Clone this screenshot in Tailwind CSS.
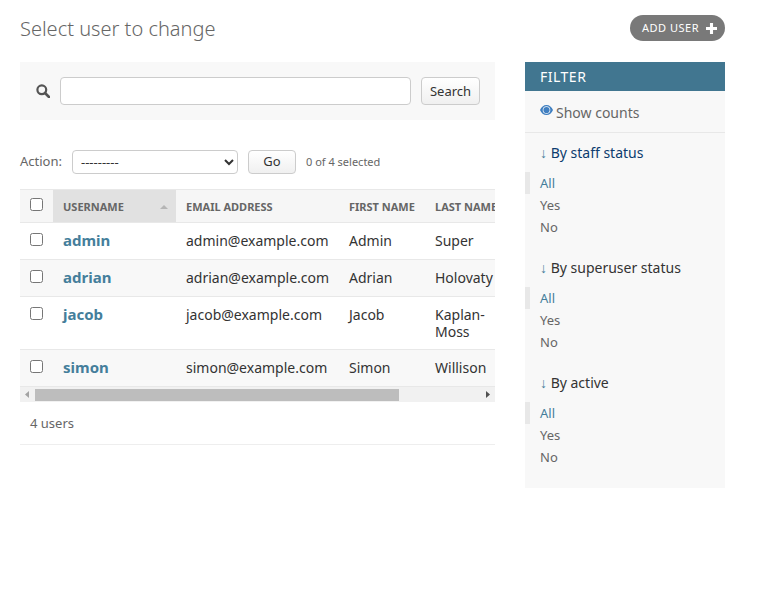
<!DOCTYPE html>
<html lang="en"><head><meta charset="utf-8"><title>Select user to change</title>
<script src="https://cdn.jsdelivr.net/npm/@tailwindcss/browser@4"></script></head>
<body class="bg-white font-['Noto_Sans',sans-serif] text-[14px] text-[#333]">
<div class="w-[768px] h-[616px] overflow-hidden px-5 pt-[15px]">
  <div class="flex w-[705px] h-[26px] items-center justify-between">
    <h1 class="pt-[2px] text-[20px] font-light leading-[28px] text-[#666]">Select user to change</h1>
    <a class="flex h-[26px] items-center gap-[7px] rounded-[13px] bg-[#797979] pl-3 pr-[8px] text-[11px] uppercase tracking-[0.5px] text-white">Add user
      <svg width="11" height="11" viewBox="0 0 10 10" class="fill-white"><path d="M3.6 0h2.8v3.6H10v2.8H6.4V10H3.6V6.4H0V3.6h3.6z"/></svg></a>
  </div>
  <div class="mt-[21px] flex gap-[30px]">
    <div class="w-[475px] shrink-0">
      <div class="flex h-[58px] items-center bg-[#f8f8f8] pl-4 pr-[15px]">
        <svg width="14" height="14" viewBox="0 0 14 14" fill="none" class="stroke-[#555]"><circle cx="5.8" cy="5.8" r="4.4" stroke-width="2.2"/><path d="M9 9l4 4" stroke-width="2.6" stroke-linecap="round"/></svg>
        <input type="text" class="ml-[10px] h-7 w-[351px] rounded-[4px] border border-[#ccc] bg-white">
        <button class="ml-[10px] h-7 w-[59px] rounded-[4px] border border-[#ccc] bg-linear-to-b from-white to-[#f0f0f0] pt-[1px] text-[13px] text-[#333]">Search</button>
      </div>
      <div class="mt-[30px] flex h-6 items-center">
        <label class="text-[13px] text-[#666]">Action:</label>
        <select class="ml-[10px] h-6 w-[166px] rounded-[4px] border border-[#ccc] bg-white pl-1 text-[13px] text-[#333]"><option>---------</option></select>
        <button class="ml-[10px] h-6 w-[48px] rounded-[4px] border border-[#ccc] bg-linear-to-b from-white to-[#f0f0f0] text-[13px] text-[#333]">Go</button>
        <span class="ml-[10px] text-[11px] text-[#666]">0 of 4 selected</span>
      </div>
      <div class="mt-[15px] w-[475px] overflow-hidden">
        <div class="overflow-hidden">
        <table class="w-[580px] table-fixed border-collapse">
          <colgroup><col class="w-[33px]"><col class="w-[123px]"><col class="w-[163px]"><col class="w-[86px]"><col class="w-[80px]"><col class="w-[95px]"></colgroup>
          <thead>
            <tr class="h-[33px] border-y border-[#e8e8e8] bg-[#f6f6f6] text-left text-[11px] font-bold uppercase text-[#666]">
              <th class="pl-[10px] align-top pt-[2px]"><input type="checkbox" class="mt-[6px] block"></th>
              <th class="bg-[#e1e1e1] pl-[10px] pt-[2px]"><div class="flex items-center justify-between pr-2">Username<svg width="8" height="4" viewBox="0 0 8 4" class="fill-[#b5b5b5]"><path d="M4 0l4 4H0z"/></svg></div></th>
              <th class="pl-[10px] pt-[2px]">Email address</th>
              <th class="pl-[10px] pt-[2px]">First name</th>
              <th class="pl-[10px] pt-[2px] whitespace-nowrap">Last name</th>
              <th class="pl-[10px] pt-[2px] whitespace-nowrap"></th>
            </tr>
          </thead>
          <tbody class="align-top leading-[17px]">
            <tr class="border-b border-[#e8e8e8]">
              <td class="pl-[10px] pt-[10px]"><input type="checkbox" class="block"></td>
              <th class="px-[10px] pt-[7px] pb-[9px] text-left text-[15px] font-bold leading-5 text-[#447e9b]">admin</th>
              <td class="px-[10px] py-[9px]">admin@example.com</td><td class="px-[10px] py-[9px]">Admin</td><td class="px-[10px] py-[9px]">Super</td><td></td>
            </tr>
            <tr class="border-b border-[#e8e8e8] bg-[#f8f8f8]">
              <td class="pl-[10px] pt-[10px]"><input type="checkbox" class="block"></td>
              <th class="px-[10px] pt-[7px] pb-[9px] text-left text-[15px] font-bold leading-5 text-[#447e9b]">adrian</th>
              <td class="px-[10px] py-[9px]">adrian@example.com</td><td class="px-[10px] py-[9px]">Adrian</td><td class="px-[10px] py-[9px]">Holovaty</td><td></td>
            </tr>
            <tr class="border-b border-[#e8e8e8]">
              <td class="pl-[10px] pt-[10px]"><input type="checkbox" class="block"></td>
              <th class="px-[10px] pt-[7px] pb-[9px] text-left text-[15px] font-bold leading-5 text-[#447e9b]">jacob</th>
              <td class="px-[10px] py-[9px]">jacob@example.com</td><td class="px-[10px] py-[9px]">Jacob</td><td class="px-[10px] py-[9px]">Kaplan-Moss</td><td></td>
            </tr>
            <tr class="bg-[#f8f8f8]">
              <td class="pl-[10px] pt-[10px]"><input type="checkbox" class="block"></td>
              <th class="px-[10px] pt-[7px] pb-[9px] text-left text-[15px] font-bold leading-5 text-[#447e9b]">simon</th>
              <td class="px-[10px] py-[9px]">simon@example.com</td><td class="px-[10px] py-[9px]">Simon</td><td class="px-[10px] py-[9px]">Willison</td><td></td>
            </tr>
          </tbody>
        </table>
        </div>
        <div class="flex h-[16px] items-center border-t border-[#e8e8e8] bg-[#f1f1f1]">
          <svg width="15" height="15" viewBox="0 0 15 15" class="fill-[#a3a3a3] shrink-0"><path d="M5 7.5l4-3.5v7z"/></svg>
          <div class="h-[12px] w-[364px] bg-[#bdbdbd]"></div>
          <div class="flex-1"></div>
          <svg width="15" height="15" viewBox="0 0 15 15" class="fill-[#505050] shrink-0"><path d="M10 7.5l-4-3.5v7z"/></svg>
        </div>
      </div>
      <p class="h-[43px] border-b border-[#eee] pl-[10px] pt-[12px] text-[13px] leading-[18px] text-[#666]">4 users</p>
    </div>
    <aside class="h-[426px] w-[200px] shrink-0 bg-[#f8f8f8]">
      <h2 class="flex h-[29px] items-center bg-[#417690] px-[15px] text-[14px] uppercase tracking-[0.5px] text-white">Filter</h2>
      <div class="flex h-[42px] items-center border-b border-[#e8e8e8] pl-[15px] pt-[2px] text-[#666]">
        <svg width="13" height="10" viewBox="0 0 13 10" class="mr-[3px] -mt-[6px] fill-[#3f7fc1]"><path fill-rule="evenodd" d="M6.5 0C3.6 0 1.2 2 0 5c1.2 3 3.6 5 6.5 5S11.8 8 13 5C11.8 2 9.4 0 6.5 0zm0 1.2a3.8 3.8 0 1 1 0 7.6 3.8 3.8 0 0 1 0-7.6z"/><circle cx="6.5" cy="5" r="3.1"/></svg>
        Show counts
      </div>
      <section class="pt-[10px]">
        <h3 class="pl-[15px] leading-[20px] text-[#0c3c6e]"><span class="text-[#447e9b]">↓</span> By staff status</h3>
        <ul class="mt-[9px] text-[13px] leading-[22px] text-[#666]">
          <li class="border-l-[5px] border-[#e8e8e8] pl-[10px] text-[#447e9b]">All</li><li class="pl-[15px]">Yes</li><li class="pl-[15px]">No</li>
        </ul>
      </section>
      <section class="pt-[20px]">
        <h3 class="pl-[15px] leading-[20px] text-[#333]"><span class="text-[#447e9b]">↓</span> By superuser status</h3>
        <ul class="mt-[9px] text-[13px] leading-[22px] text-[#666]">
          <li class="border-l-[5px] border-[#e8e8e8] pl-[10px] text-[#447e9b]">All</li><li class="pl-[15px]">Yes</li><li class="pl-[15px]">No</li>
        </ul>
      </section>
      <section class="pt-[20px]">
        <h3 class="pl-[15px] leading-[20px] text-[#333]"><span class="text-[#447e9b]">↓</span> By active</h3>
        <ul class="mt-[9px] text-[13px] leading-[22px] text-[#666]">
          <li class="border-l-[5px] border-[#e8e8e8] pl-[10px] text-[#447e9b]">All</li><li class="pl-[15px]">Yes</li><li class="pl-[15px]">No</li>
        </ul>
      </section>
    </aside>
  </div>
</div>
</body></html>
